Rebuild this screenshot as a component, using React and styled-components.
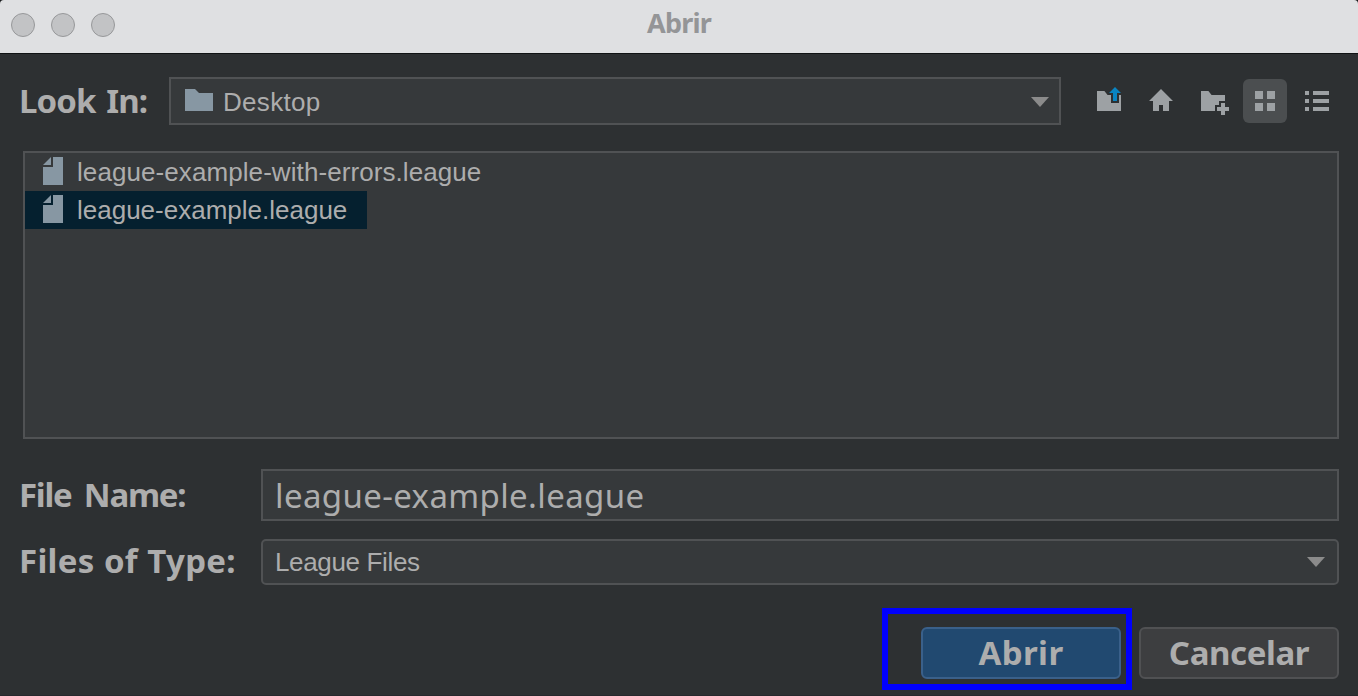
import React from "react";
import styled, { createGlobalStyle, css } from "styled-components";

const color = {
  bg: "#2d3032",
  field: "#36393b",
  line: "#505254",
  text: "#adadad",
  steel: "#8797a3",
  tool: "#9da1a4",
};
const sans = '"Liberation Sans", Arial, sans-serif';
const humanist = '"Noto Sans", "Open Sans", sans-serif';

const GlobalStyle = createGlobalStyle`
  *, *::before, *::after { box-sizing: border-box; }
  body { margin: 0; background: #17191a; overflow: hidden; }
  button, input { margin: 0; outline: none; }
  svg { display: block; flex: none; }
`;

const Window = styled.div`
  width: 1358px;
  height: 696px;
  display: flex;
  flex-direction: column;
  background: ${color.bg};
  border-radius: 4px 4px 0 0;
  border-bottom: 1px solid #27282d;
  overflow: hidden;
`;

const TitleBar = styled.header`
  height: 54px;
  flex: none;
  display: grid;
  grid-template-columns: 1fr auto 1fr;
  align-items: start;
  background: #dfe0e2;
  border-bottom: 1px solid #101314;
`;

const Lights = styled.div`
  display: flex;
  gap: 16px;
  padding: 13px 0 0 11px;
`;

const Light = styled.span`
  width: 24px;
  height: 24px;
  border-radius: 50%;
  background: #c2c3c5;
  border: 1px solid #97989a;
`;

const Title = styled.h1`
  margin: 0;
  font: 700 27px/46px ${humanist};
  letter-spacing: -0.8px;
  color: #949597;
`;

const Body = styled.main`
  flex: 1;
  display: flex;
  flex-direction: column;
  padding: 23px 19px 0 20px;
`;

const LookRow = styled.div`
  display: flex;
  align-items: center;
  height: 48px;
`;

const Label = styled.label`
  width: ${(p) => p.$width}px;
  flex: none;
  padding-bottom: ${(p) => p.$lift || 0}px;
  font: 700 33px/46px ${humanist};
  letter-spacing: ${(p) => p.$tracking}px;
  word-spacing: ${(p) => p.$words || 0}px;
  white-space: nowrap;
  text-indent: -1px;
  color: ${color.text};
`;

const fieldBox = css`
  background: ${color.field};
  border: 2px solid ${color.line};
  color: ${color.text};
`;

const Combo = styled.div`
  ${fieldBox}
  display: flex;
  align-items: center;
  flex: 1;
  height: ${(p) => p.$height}px;
  padding: ${(p) => p.$pad};
  border-radius: ${(p) => p.$radius || 0}px;
  font: 26px/30px ${sans};
`;

const ComboText = styled.span`
  flex: 1;
  margin-left: ${(p) => p.$indent || 0}px;
  padding-top: ${(p) => p.$drop || 0}px;
  letter-spacing: ${(p) => p.$tracking || 0}px;
`;

const Toolbar = styled.div`
  display: flex;
  gap: 8px;
  margin-left: 26px;
`;

const ToolButton = styled.button`
  width: 44px;
  height: 44px;
  padding: 6px;
  border: 0;
  border-radius: 6px;
  background: ${(p) => (p.$pressed ? "#4b4e50" : "transparent")};
  color: ${color.tool};
`;

const FileList = styled.ul`
  ${fieldBox}
  height: 288px;
  margin: 26px 0 30px 3px;
  padding: 0;
  list-style: none;
  display: flex;
  flex-direction: column;
  align-items: flex-start;
`;

const FileRow = styled.li`
  display: flex;
  align-items: center;
  gap: 14px;
  height: 38px;
  width: ${(p) => p.$width}px;
  padding-left: 18px;
  font: 26px/38px ${sans};
  letter-spacing: ${(p) => p.$tracking || 0}px;
  white-space: nowrap;
  background: ${(p) => (p.$selected ? "#05202f" : "transparent")};
`;

const FormRow = styled.div`
  display: flex;
  align-items: center;
  height: ${(p) => p.$height}px;
  margin-bottom: 18px;
`;

const NameInput = styled.input`
  ${fieldBox}
  flex: 1;
  min-width: 0;
  height: 52px;
  padding: 0 12px;
  border-radius: 0;
  font: 33px/48px ${humanist};
  letter-spacing: 0.38px;
`;

const Actions = styled.footer`
  display: flex;
  justify-content: flex-end;
  gap: 18px;
  margin-top: 24px;
`;

const ButtonSlot = styled.div`
  position: relative;
`;

const Button = styled.button`
  display: block;
  width: 200px;
  height: 52px;
  padding: 0;
  border: 2px solid ${(p) => (p.$primary ? "#3a608a" : "#505153")};
  border-radius: 6px;
  background: ${(p) => (p.$primary ? "#214970" : "#3d3e40")};
  color: ${color.text};
  font: 700 33px/48px ${humanist};
  letter-spacing: ${(p) => p.$tracking}px;
`;

const Highlight = styled.div`
  position: absolute;
  top: -19px;
  left: -39px;
  width: 250px;
  height: 82px;
  border: 6px solid #0000fe;
  pointer-events: none;
`;

const ToolIcon = ({ children }) => (
  <svg width="32" height="32" viewBox="0 0 16 16" fill="currentColor">{children}</svg>
);

const FolderIcon = () => (
  <svg width="28" height="24" viewBox="0 0 28 24" fill={color.steel}>
    <path d="M0 0h10l4 4h14v18H0z" />
  </svg>
);

const FileIcon = () => (
  <svg width="20" height="30" viewBox="0 0 20 30" fill={color.steel}>
    <path d="M8 0v8H0zM10 0h10v28H0V10h10z" />
  </svg>
);

const Arrow = ({ drop = 0 }) => (
  <svg width="18" height={10 + drop * 2} viewBox={`0 ${-drop * 2} 18 ${10 + drop * 2}`} fill="#8b8b8b">
    <path d="M0 0h18l-9 10z" />
  </svg>
);

const files = [
  { name: "league-example-with-errors.league", tracking: 0.08 },
  { name: "league-example.league", width: 342, selected: true, tracking: 0 },
];

export default function App() {
  return (
    <>
      <GlobalStyle />
      <Window>
        <TitleBar>
          <Lights><Light /><Light /><Light /></Lights>
          <Title>Abrir</Title>
        </TitleBar>
        <Body>
          <LookRow>
            <Label $width={149} $tracking={-0.9} $words={3}>Look In:</Label>
            <Combo $height={48} $pad="0 10px 0 14px">
              <FolderIcon />
              <ComboText $indent={10} $tracking={0.3} $drop={2}>Desktop</ComboText>
              <Arrow drop={1} />
            </Combo>
            <Toolbar>
              <ToolButton aria-label="Up One Level">
                <ToolIcon>
                  <path d="M2 3h3.7l1.6 2H9v4h4V5h1v8H2z" />
                  <path fill="#0a84c1" d="M11 1l3 3h-2v4h-2V4H8z" />
                </ToolIcon>
              </ToolButton>
              <ToolButton aria-label="Home">
                <ToolIcon><path d="M8 2l6 6h-2v5H9v-3H7v3H4V8H2z" /></ToolIcon>
              </ToolButton>
              <ToolButton aria-label="Create New Folder">
                <ToolIcon>
                  <path d="M2 3h3.7l1.6 2H14v3h-3v2H9v3H2zM12 9h2v2h2v2h-2v2h-2v-2h-2v-2h2z" />
                </ToolIcon>
              </ToolButton>
              <ToolButton aria-label="List" $pressed>
                <ToolIcon><path d="M3 3h4v4H3zM9 3h4v4H9zM3 9h4v4H3zM9 9h4v4H9z" /></ToolIcon>
              </ToolButton>
              <ToolButton aria-label="Details">
                <ToolIcon>
                  <path d="M2 3h2v2H2zM6 3h8v2H6zM2 7h2v2H2zM6 7h8v2H6zM2 11h2v2H2zM6 11h8v2H6z" />
                </ToolIcon>
              </ToolButton>
            </Toolbar>
          </LookRow>
          <FileList>
            {files.map((f) => (
              <FileRow key={f.name} $width={f.width} $selected={f.selected} $tracking={f.tracking}>
                <FileIcon />
                {f.name}
              </FileRow>
            ))}
          </FileList>
          <FormRow $height={52}>
            <Label $width={241} $tracking={-1.25} $words={5}>File Name:</Label>
            <NameInput defaultValue="league-example.league" />
          </FormRow>
          <FormRow $height={46}>
            <Label $width={241} $tracking={0.28} $words={0.6} $lift={2}>Files of Type:</Label>
            <Combo $height={46} $pad="0 12px" $radius={5}>
              <ComboText $tracking={-0.35}>League Files</ComboText>
              <Arrow />
            </Combo>
          </FormRow>
          <Actions>
            <ButtonSlot>
              <Button $primary $tracking={0.4}>Abrir</Button>
              <Highlight />
            </ButtonSlot>
            <Button $tracking={-0.4}>Cancelar</Button>
          </Actions>
        </Body>
      </Window>
    </>
  );
}
